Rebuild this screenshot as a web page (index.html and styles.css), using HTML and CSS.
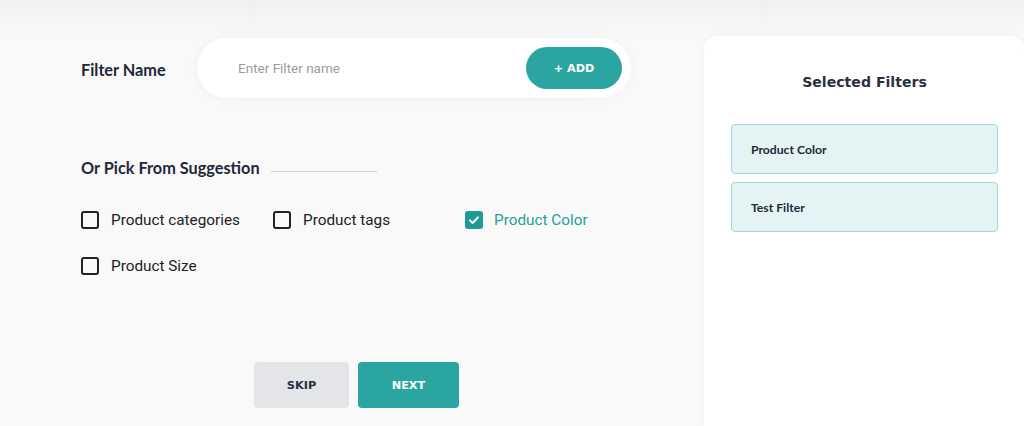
FILE: index.html
```html
<!DOCTYPE html>
<html>
<head>
<meta charset="utf-8">
<link rel="stylesheet" href="styles.css">
</head>
<body>
<div class="page">
  <main class="main">
    <div class="name-row">
      <label class="label">Filter Name</label>
      <div class="input-pill">
        <span class="placeholder">Enter Filter name</span>
        <button class="add-btn">+ ADD</button>
      </div>
    </div>
    <div class="suggest-head">
      <span class="label">Or Pick From Suggestion</span>
      <span class="rule"></span>
    </div>
    <div class="options">
      <div class="opt"><span class="box"></span><span class="opt-text">Product categories</span></div>
      <div class="opt"><span class="box"></span><span class="opt-text">Product tags</span></div>
      <div class="opt checked"><span class="box"><svg viewBox="0 0 18 18" width="18" height="18"><path d="M5 9.4l2.6 2.6L13 6.4" fill="none" stroke="#fff" stroke-width="2" stroke-linecap="round" stroke-linejoin="round"/></svg></span><span class="opt-text">Product Color</span></div>
      <div class="opt"><span class="box"></span><span class="opt-text">Product Size</span></div>
    </div>
    <div class="actions">
      <button class="btn skip">SKIP</button>
      <button class="btn next">NEXT</button>
    </div>
  </main>
  <aside class="panel">
    <h2 class="panel-title">Selected Filters</h2>
    <div class="chip">Product Color</div>
    <div class="chip">Test Filter</div>
  </aside>
</div>
</body>
</html>
```
FILE: styles.css
```css
html, body {
  margin: 0;
  padding: 0;
  height: 100%;
}
body {
  background: linear-gradient(to bottom, #f0f0f0 0px, #f9f9f9 36px, #f9f9f9 100%);
  overflow: hidden;
}
.page {
  display: flex;
  height: 426px;
}
.main {
  width: 704px;
  padding: 38px 0 0 81px;
  box-sizing: border-box;
}
.name-row {
  display: flex;
  align-items: center;
  height: 60px;
}
.label {
  font-family: Lato, "Liberation Sans", sans-serif;
  font-weight: 700;
  font-size: 16.3px;
  color: #1e2838;
}
.name-row .label {
  width: 116px;
  margin-top: 2px;
}
.input-pill {
  width: 434px;
  height: 60px;
  box-sizing: border-box;
  background: #fff;
  border-radius: 30px;
  box-shadow: 0 0 12px rgba(0,0,0,0.04);
  display: flex;
  align-items: center;
  justify-content: space-between;
  padding: 0 9px 0 41px;
}
.placeholder {
  font-family: Roboto, sans-serif;
  font-size: 13.5px;
  color: #9b9b9b;
}
.add-btn {
  width: 96px;
  height: 42px;
  border: none;
  border-radius: 21px;
  background: #2aa5a1;
  color: #fff;
  font-family: "DejaVu Sans", sans-serif;
  font-weight: 700;
  font-size: 11.2px;
  padding: 0;
}
.suggest-head {
  display: flex;
  align-items: center;
  margin-top: 58px;
  height: 22px;
}
.rule {
  width: 106px;
  height: 1px;
  background: #cfcfcf;
  margin-left: 11px;
  margin-top: 8px;
}
.options {
  display: grid;
  grid-template-columns: 192px 192px 192px;
  row-gap: 24px;
  margin-top: 31px;
}
.opt {
  display: flex;
  align-items: center;
  height: 22px;
}
.box {
  width: 18px;
  height: 18px;
  box-sizing: border-box;
  border: 2px solid #222;
  border-radius: 3px;
  margin-right: 12px;
  flex: none;
  display: flex;
}
.checked .box {
  background: #1e9b97;
  border: none;
  margin-right: 11px;
}
.opt-text {
  font-family: Roboto, sans-serif;
  font-size: 15.3px;
  color: #222;
}
.checked .opt-text {
  color: #23a19d;
}
.actions {
  display: flex;
  gap: 9px;
  margin-top: 85px;
  padding-left: 173px;
}
.btn {
  height: 46px;
  border: none;
  border-radius: 4px;
  font-family: "DejaVu Sans", sans-serif;
  font-weight: 700;
  font-size: 11.3px;
  padding: 0;
}
.skip {
  width: 95px;
  background: #e4e5e8;
  color: #2b3040;
}
.next {
  width: 101px;
  background: #2aa5a1;
  color: #fff;
}
.panel {
  flex: none;
  width: 320px;
  margin-top: 36px;
  background: #fff;
  border-radius: 14px 14px 0 0;
  box-shadow: 0 0 10px rgba(0,0,0,0.03);
  padding: 0 26px 0 27px;
  box-sizing: border-box;
}
.panel-title {
  margin: 36px 0 32px;
  text-align: center;
  font-family: "DejaVu Sans", sans-serif;
  font-weight: 700;
  font-size: 14.1px;
  color: #2b3040;
  line-height: 20px;
}
.chip {
  height: 50px;
  box-sizing: border-box;
  background: #e4f4f4;
  border: 1px solid #a6d6d5;
  border-radius: 4px;
  display: flex;
  align-items: center;
  padding-left: 19px;
  margin-bottom: 8px;
  font-family: Lato, "Liberation Sans", sans-serif;
  font-weight: 700;
  font-size: 12.2px;
  color: #1e2838;
}
```
